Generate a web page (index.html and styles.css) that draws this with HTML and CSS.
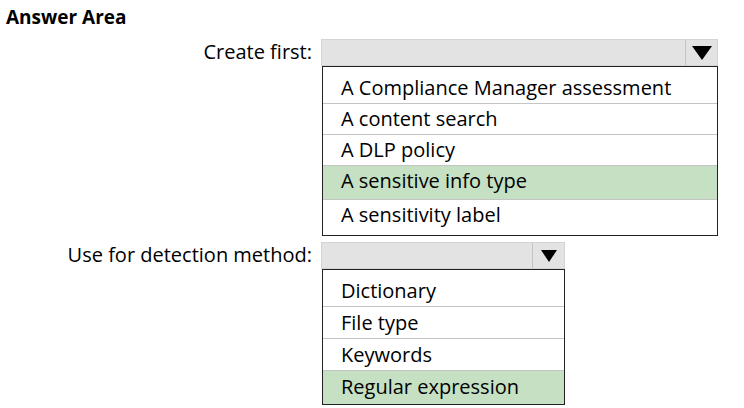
FILE: index.html
```html
<!DOCTYPE html>
<html lang="en">
<head>
  <meta charset="UTF-8">
  <title>Answer Area</title>
  <link rel="stylesheet" href="styles.css">
</head>
<body>

  <h2 class="title">Answer Area</h2>

  <div class="answer-grid">
    <div class="label">Create first:</div>
    <div class="picker picker-wide">
      <div class="select">
        <span class="select-value"></span>
        <span class="select-arrow"><svg width="20" height="14" viewBox="0 0 20 14"><polygon points="0,0 20,0 10,14" fill="#000"/></svg></span>
      </div>
      <ul class="options">
        <li class="option first">A Compliance Manager assessment</li>
        <li class="option">A content search</li>
        <li class="option">A DLP policy</li>
        <li class="option selected">A sensitive info type</li>
        <li class="option last">A sensitivity label</li>
      </ul>
    </div>

    <div class="label">Use for detection method:</div>
    <div class="picker picker-narrow">
      <div class="select">
        <span class="select-value"></span>
        <span class="select-arrow"><svg width="16" height="12" viewBox="0 0 16 12"><polygon points="0,0 16,0 8,12" fill="#000"/></svg></span>
      </div>
      <ul class="options">
        <li class="option first">Dictionary</li>
        <li class="option">File type</li>
        <li class="option">Keywords</li>
        <li class="option selected last">Regular expression</li>
      </ul>
    </div>
  </div>

</body>
</html>
```

FILE: styles.css
```css
body {
  font-family: 'Open Sans', 'Noto Sans', sans-serif;
  background-color: #fff;
  color: #000;
  margin: 0;
  padding: 0;
}

.title {
  font-size: 19px;
  font-weight: bold;
  margin: 0;
  padding: 5px 0 0 6px;
  line-height: 24px;
}

.answer-grid {
  display: grid;
  grid-template-columns: 312px auto;
  column-gap: 9px;
  row-gap: 6px;
  margin-top: 10px;
  justify-content: start;
}

.label {
  text-align: right;
  font-size: 20px;
  line-height: 26px;
}

.picker-wide {
  width: 397px;
}

.picker-narrow {
  width: 244px;
}

.select {
  display: flex;
  height: 25px;
  background-color: #e3e3e3;
  border: 1px solid #d4d4d4;
}

.select-value {
  flex: 1;
}

.select-arrow {
  width: 31px;
  border-left: 1px solid #c4c4c4;
  display: flex;
  align-items: center;
  justify-content: center;
}

.options {
  list-style: none;
  margin: 0 0 0 1px;
  padding: 0;
  border: 1px solid #222;
  font-size: 20px;
}

.option {
  line-height: 30px;
  padding-left: 18px;
  border-bottom: 1px solid #c4c4c4;
}

.option.first {
  padding-top: 6px;
}

.option.selected {
  background-color: #c5e0c3;
  padding-bottom: 3px;
}

.option.last {
  border-bottom: none;
  padding-bottom: 5px;
}

.picker-narrow .option {
  line-height: 31px;
}

.picker-narrow .option.first {
  padding-top: 5px;
}

.option.selected.last {
  padding-bottom: 2px;
}
```
